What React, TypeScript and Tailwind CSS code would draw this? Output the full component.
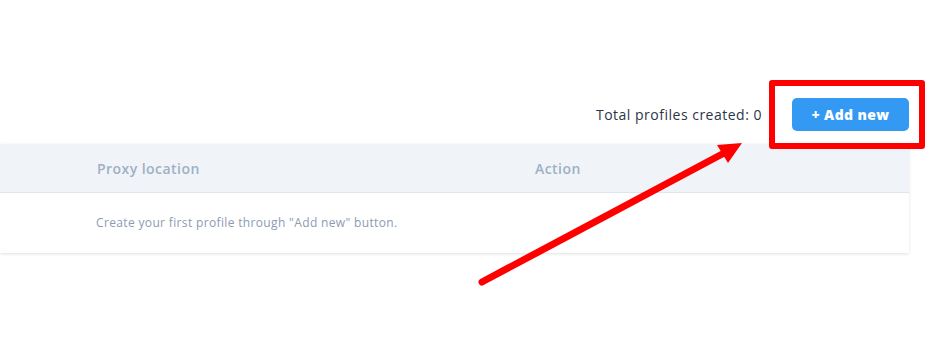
export default function App() {
  return (
    <div
      className="relative h-[360px] w-[939px] overflow-hidden bg-white"
      style={{ fontFamily: '"Open Sans", "Liberation Sans", sans-serif' }}
    >
      <div className="pr-[30px] pt-[98px]">
        <div className="flex items-center justify-end gap-[30px]">
          <span className="text-[14px] tracking-[0.5px] text-[#2b3547]">Total profiles created: 0</span>
          <button
            type="button"
            className="h-[33px] w-[117px] rounded-[5px] bg-[#3399f3] text-[14px] font-extrabold tracking-[0.4px] text-white"
          >
            + Add new
          </button>
        </div>

        <div className="mt-[13px] shadow-[0_1px_3px_rgba(0,0,0,0.12)]">
          <div className="flex h-[49px] items-center border-b border-[#dfe5ec] bg-[#f0f4f8] pl-[97px] text-[14px] font-semibold tracking-[0.45px] text-[#9fb0c4]">
            <div className="w-[438px]">Proxy location</div>
            <div>Action</div>
          </div>
          <div className="flex h-[60px] items-center bg-white pl-[96px] text-[12px] tracking-[0.35px] text-[#8c9bb2]">
            Create your first profile through "Add new" button.
          </div>
        </div>
      </div>

      {/* annotation: highlight box */}
      <div className="absolute left-[769px] top-[80px] h-[69px] w-[156px] rounded-[3px] border-[6px] border-[#ff0000]" />

      {/* annotation: arrow */}
      <svg className="absolute left-0 top-0" width="939" height="360" viewBox="0 0 939 360">
        <line x1="482" y1="282" x2="726" y2="152" stroke="#ff0000" strokeWidth="7" strokeLinecap="round" />
        <polygon points="742,143 717,145 728,163" fill="#ff0000" />
      </svg>
    </div>
  );
}
